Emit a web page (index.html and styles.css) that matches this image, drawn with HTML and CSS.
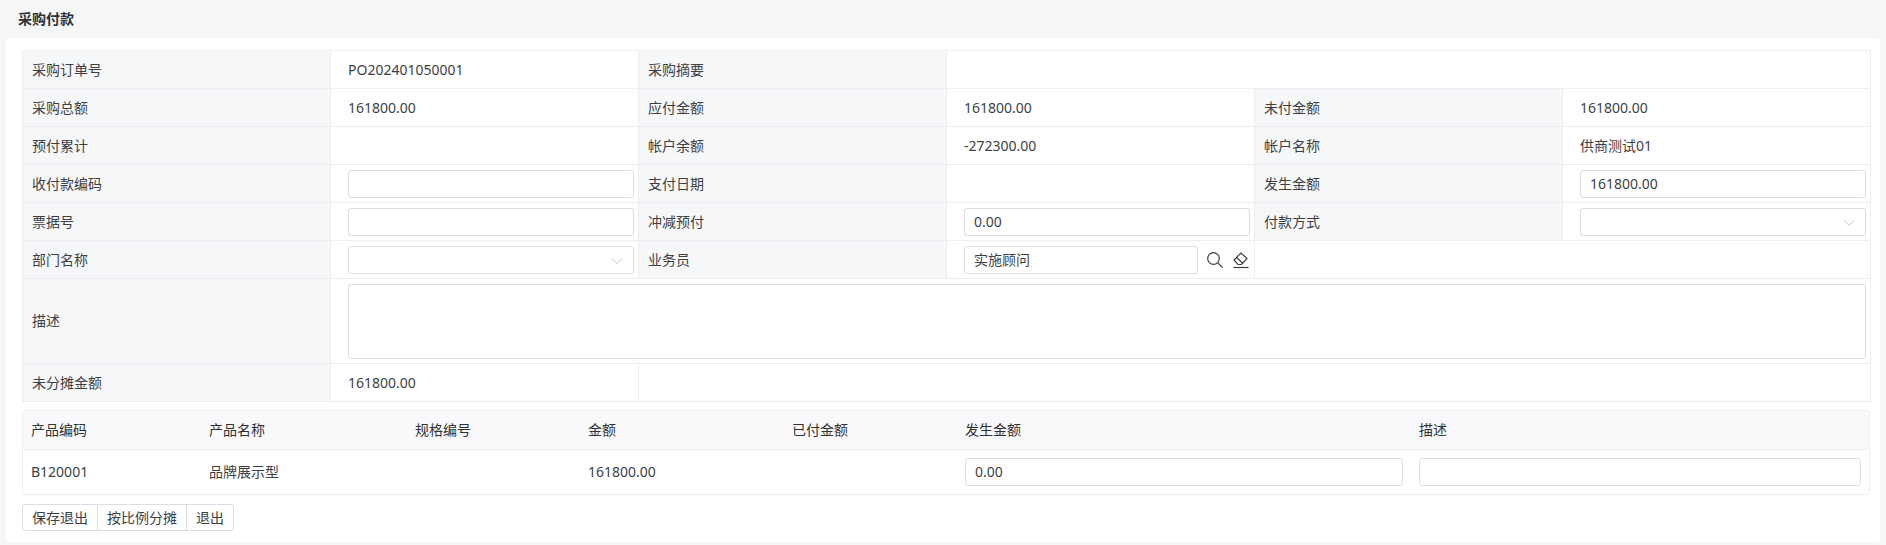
FILE: index.html
```html
<!DOCTYPE html>
<html lang="zh-CN">
<head>
<meta charset="utf-8">
<title>采购付款</title>
<link rel="stylesheet" href="styles.css">
</head>
<body>
<header class="page-title">采购付款</header>
<main class="card">
  <table class="form">
    <colgroup><col class="c"><col class="c"><col class="c"><col class="c"><col class="c"><col class="c"></colgroup>
    <tr><th>采购订单号</th><td>PO202401050001</td><th>采购摘要</th><td colspan="3"></td></tr>
    <tr><th>采购总额</th><td>161800.00</td><th>应付金额</th><td>161800.00</td><th>未付金额</th><td>161800.00</td></tr>
    <tr><th>预付累计</th><td></td><th>帐户余额</th><td>-272300.00</td><th>帐户名称</th><td>供商测试01</td></tr>
    <tr><th>收付款编码</th><td><div class="input"></div></td><th>支付日期</th><td></td><th>发生金额</th><td><div class="input">161800.00</div></td></tr>
    <tr><th>票据号</th><td><div class="input"></div></td><th>冲减预付</th><td><div class="input">0.00</div></td><th>付款方式</th><td><div class="input select"><svg class="chev" viewBox="0 0 12 8"><path d="M1 1.5 6 6.5 11 1.5"/></svg></div></td></tr>
    <tr><th>部门名称</th><td><div class="input select"><svg class="chev" viewBox="0 0 12 8"><path d="M1 1.5 6 6.5 11 1.5"/></svg></div></td><th>业务员</th><td>
      <div class="picker"><div class="input">实施顾问</div>
        <svg class="ico" viewBox="0 0 18 18"><circle cx="7.5" cy="7.5" r="5.8"/><path d="M12 12l4.6 4.6"/></svg>
        <svg class="ico" viewBox="0 0 18 18"><path d="M2 9 9 2l6 5.5-5.5 6H6z"/><path d="M4.5 6.5l6.5 6"/><path d="M1.5 16.5h15"/></svg>
      </div></td><td colspan="2"></td></tr>
    <tr class="tall"><th>描述</th><td colspan="5"><div class="input area"></div></td></tr>
    <tr><th>未分摊金额</th><td>161800.00</td><td colspan="4"></td></tr>
  </table>
  <div class="lines">
    <div class="line-row head"><span>产品编码</span><span>产品名称</span><span>规格编号</span><span>金额</span><span>已付金额</span><span>发生金额</span><span>描述</span></div>
    <div class="line-row body"><span>B120001</span><span>品牌展示型</span><span></span><span>161800.00</span><span></span><div class="input">0.00</div><div class="input"></div></div>
  </div>
  <div class="btns"><button>保存退出</button><button>按比例分摊</button><button>退出</button></div>
</main>
</body>
</html>
```
FILE: styles.css
```css
* { box-sizing: border-box; }
html, body { margin: 0; height: 545px; overflow: hidden; }
body { background: #f5f6f8; color: #3d3f45; font: 14px/20px "Noto Sans", "Noto Sans CJK SC", sans-serif; }
.page-title { height: 38px; padding: 9px 0 0 18px; font-weight: 700; color: #303133; }
.card { margin: 0 6px; height: 504px; padding: 12px 10px 0 16px; background: #fff; border-radius: 4px; }
.form { width: 1848px; table-layout: fixed; border-collapse: collapse; border: 1px solid #eceef2; }
.form .c { width: 308px; }
.form tr { height: 38px; }
.form tr.tall { height: 85px; }
.form th, .form td { border: 1px solid #eceef2; padding: 0 4px 0 17px; font-weight: 400; text-align: left; }
.form th { background: #f6f7f9; padding: 0 0 0 9px; }
.input { position: relative; height: 28px; padding: 3px 9px; background: #fff; border: 1px solid #dcdee6; border-radius: 3px; }
.area { height: 75px; }
.chev { position: absolute; right: 10px; top: 10px; width: 12px; height: 8px; }
.chev path { fill: none; stroke: #c4c7cf; stroke-width: 1; }
.picker { display: flex; align-items: center; gap: 8px; }
.picker .input { width: 234px; }
.ico { width: 18px; height: 18px; flex: none; }
.ico path, .ico circle { fill: none; stroke: #3d3f45; stroke-width: 1.2; }
.lines { margin-top: 8px; width: 1848px; border: 1px solid #eceef2; border-radius: 3px; }
.line-row { display: grid; grid-template-columns: 178px 206px 173px 204px 173px 454px 1fr; align-items: center; padding-left: 8px; }
.head { height: 39px; background: #f9f9fb; border-bottom: 1px solid #eceef2; color: #303133; }
.body { height: 44px; }
.body .input:last-child { margin-right: 8px; }
.body .input { margin-right: 16px; }
.btns { display: flex; margin-top: 9px; }
button { height: 27px; padding: 0 9px; font: inherit; color: inherit; background: #fff; border: 1px solid #dcdee6; border-left-width: 0; }
button:first-child { border-left-width: 1px; border-radius: 3px 0 0 3px; }
button:last-child { border-radius: 0 3px 3px 0; }
```
